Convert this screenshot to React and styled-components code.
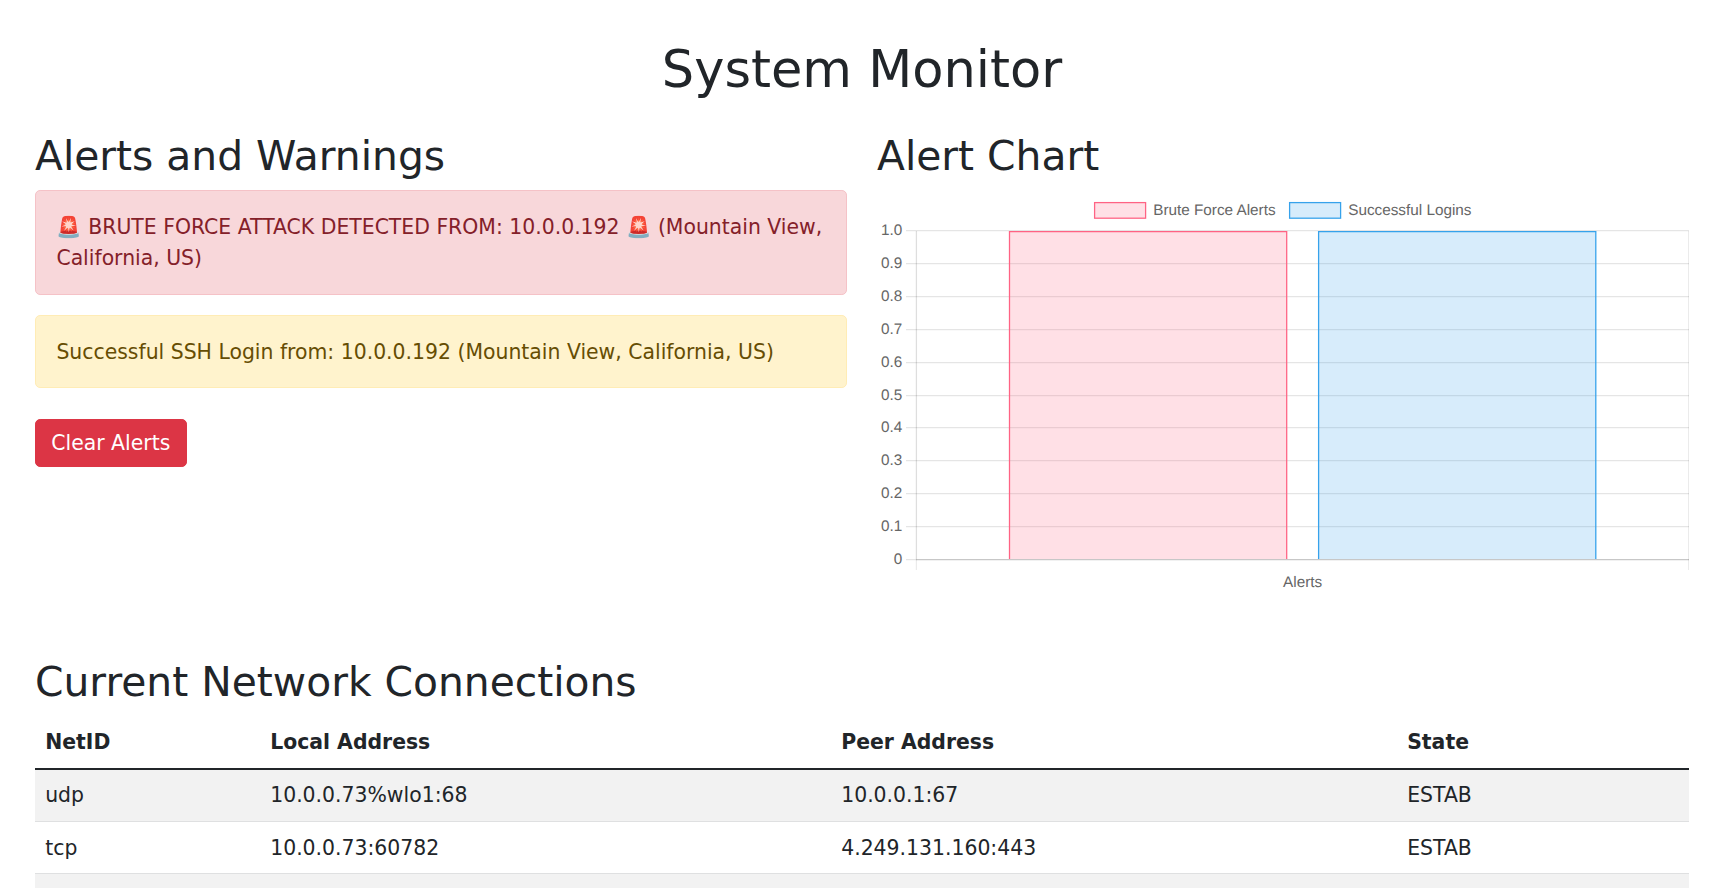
import React from "react";
import styled, { createGlobalStyle } from "styled-components";

const GlobalStyle = createGlobalStyle`
  *, *::before, *::after { box-sizing: border-box; }
  html { font-size: 20.4px; }
  body {
    margin: 0;
    background: #fff;
    color: #212529;
    font-family: "DejaVu Sans", "Noto Color Emoji", sans-serif;
    font-size: 1rem;
    line-height: 1.5;
  }
`;

const Page = styled.main`
  height: 100vh;
  overflow: hidden;
  padding: 39.2px 20px 0 35px;
`;

const Title = styled.h1`
  margin: 0 0 31.6px;
  font-size: 2.5rem;
  font-weight: 500;
  line-height: 61.2px;
  text-align: center;
`;

const SectionTitle = styled.h2`
  margin: 0 0 9px;
  font-size: 2rem;
  font-weight: 500;
  line-height: 49px;
`;

const Columns = styled.div`
  display: grid;
  grid-template-columns: 1fr 1fr;
  column-gap: 30px;
`;

const palettes = {
  danger: { color: "#842029", background: "#f8d7da", border: "#f5c2c7", line: "31px" },
  warning: { color: "#664d03", background: "#fff3cd", border: "#ffecb5", line: "30px" },
};

const Alert = styled.div`
  margin-bottom: 20px;
  padding: 21px 1rem 20px;
  border: 1px solid ${(p) => palettes[p.$kind].border};
  border-radius: 0.25rem;
  color: ${(p) => palettes[p.$kind].color};
  background: ${(p) => palettes[p.$kind].background};
  line-height: ${(p) => palettes[p.$kind].line};
`;

const ClearButton = styled.button`
  display: block;
  margin-top: 31px;
  padding: 8px 0.75rem;
  border: 1px solid #dc3545;
  border-radius: 0.25rem;
  color: #fff;
  background: #dc3545;
  font: inherit;
  line-height: 30px;
`;

const Chart = styled.svg`
  display: block;
  width: 812px;
  height: 406px;
  font-family: "Helvetica Neue", Helvetica, "Liberation Sans", Arial, sans-serif;
  font-size: 15.3px;
  fill: #666;
  stroke-width: 1.275px;

  text { text-rendering: geometricPrecision; }
`;

const Connections = styled.section`
  margin-top: 62px;
`;

const Table = styled.table`
  width: 100%;
  table-layout: fixed;
  border-collapse: separate;
  border-spacing: 0;
`;

const HeadCell = styled.th`
  width: ${(p) => p.$width};
  height: 54px;
  padding: 0 0.5rem;
  border-bottom: 2px solid #212529;
  text-align: left;
  font-weight: 700;
`;

const Cell = styled.td`
  height: 52px;
  padding: 10px 0.5rem 0;
  border-bottom: 1px solid #dfe0e1;
  line-height: 30px;
  vertical-align: top;
`;

const Row = styled.tr`
  &:nth-child(odd) { background: #f2f2f2; }
  &:nth-child(even) ${Cell} { padding-top: 11px; }
`;

const ticks = ["1.0", "0.9", "0.8", "0.7", "0.6", "0.5", "0.4", "0.3", "0.2", "0.1", "0"];

const series = [
  { label: "Brute Force Alerts", x: 132.5, keyX: 217, textX: 276.2, stroke: "rgb(255,99,132)", fill: "rgba(255,99,132,0.2)" },
  { label: "Successful Logins", x: 441.6, keyX: 412, textX: 471.2, stroke: "rgb(54,162,235)", fill: "rgba(54,162,235,0.2)" },
];

function AlertChart() {
  return (
    <Chart viewBox="0 0 812 406">
      {ticks.map((tick, i) => {
        const y = Math.round(40 + i * 32.9) + 0.6;
        return (
          <g key={tick}>
            <path d={`M29 ${y}H812`} stroke="rgba(0,0,0,0.1)" />
            <text x="25.2" y={y + 4.6} textAnchor="end">{tick}</text>
          </g>
        );
      })}
      <path d="M39.4 369V380M811.6 41V380" stroke="rgba(0,0,0,0.08)" />
      <path d="M39.4 41V369M39 369.6H812" stroke="rgba(0,0,0,0.13)" />
      {series.map((s) => (
        <g key={s.label}>
          <path d={`M${s.x} 41.5H${s.x + 277.2}V369H${s.x}Z`} fill={s.fill} />
          <path d={`M${s.x} 369V41.6H${s.x + 277.2}V369`} fill="none" stroke={s.stroke} />
          <rect x={s.keyX + 0.6} y="12.6" width="51" height="15.6" fill={s.fill} stroke={s.stroke} />
          <text x={s.textX} y="25">{s.label}</text>
        </g>
      ))}
      <text x="425.6" y="397.4" textAnchor="middle">Alerts</text>
    </Chart>
  );
}

const connections = [
  ["udp", "10.0.0.73%wlo1:68", "10.0.0.1:67", "ESTAB"],
  ["tcp", "10.0.0.73:60782", "4.249.131.160:443", "ESTAB"],
  ["", "", "", ""],
];

export default function App() {
  return (
    <>
      <GlobalStyle />
      <Page>
        <Title>System Monitor</Title>
        <Columns>
          <section>
            <SectionTitle>Alerts and Warnings</SectionTitle>
            <Alert $kind="danger">
              🚨 BRUTE FORCE ATTACK DETECTED FROM: 10.0.0.192 🚨 (Mountain View, California, US)
            </Alert>
            <Alert $kind="warning">
              Successful SSH Login from: 10.0.0.192 (Mountain View, California, US)
            </Alert>
            <ClearButton type="button">Clear Alerts</ClearButton>
          </section>
          <section>
            <SectionTitle>Alert Chart</SectionTitle>
            <AlertChart />
          </section>
        </Columns>
        <Connections>
          <SectionTitle>Current Network Connections</SectionTitle>
          <Table>
            <thead>
              <tr>
                <HeadCell $width="225px">NetID</HeadCell>
                <HeadCell $width="571px">Local Address</HeadCell>
                <HeadCell $width="566px">Peer Address</HeadCell>
                <HeadCell $width="auto">State</HeadCell>
              </tr>
            </thead>
            <tbody>
              {connections.map((cells, r) => (
                <Row key={r}>
                  {cells.map((cell, c) => <Cell key={c}>{cell}</Cell>)}
                </Row>
              ))}
            </tbody>
          </Table>
        </Connections>
      </Page>
    </>
  );
}
